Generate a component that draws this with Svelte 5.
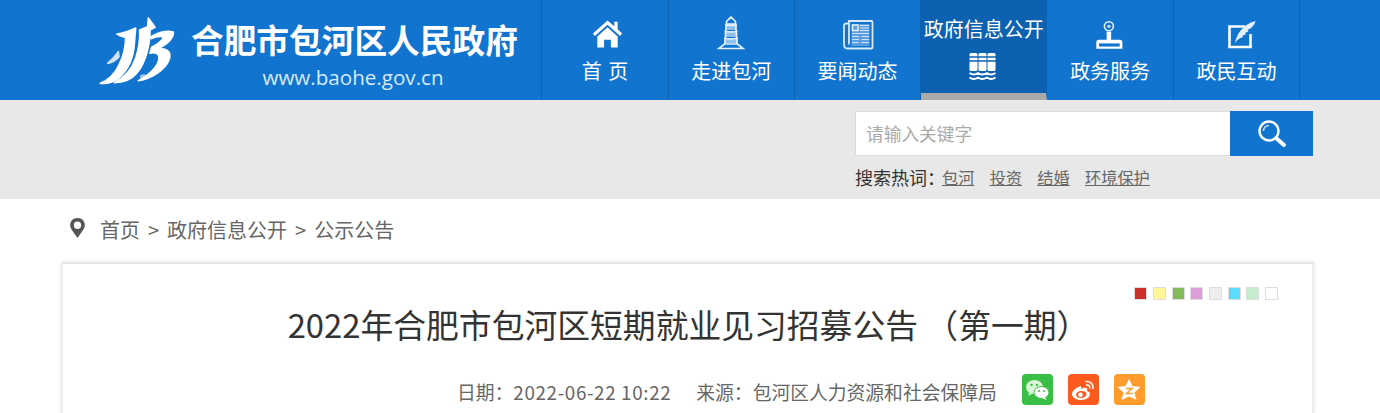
<script>
  const navItems = [
    { label: '首 页', icon: 'home' },
    { label: '走进包河', icon: 'tower' },
    { label: '要闻动态', icon: 'news' },
    { label: '政府信息公开', icon: 'books', active: true },
    { label: '政务服务', icon: 'stamp' },
    { label: '政民互动', icon: 'edit' }
  ]
  const hotWords = ['包河', '投资', '结婚', '环境保护']
  const swatches = ['#cc3229', '#fff79a', '#83ba5a', '#dd9dd8', '#eeeeee', '#58dcff', '#c7edcf', '#ffffff']
</script>

<header class="top">
  <div class="brand">
    <svg class="logo" width="90" height="80" viewBox="0 0 270 240">
      <g fill="#fff" stroke="#fff" stroke-width="5" stroke-linejoin="round">
        <path d="M66 72 C85 70 105 62 122 54 L118 100 C116 140 100 180 70 205 C55 216 35 222 16 220 C40 210 60 190 72 165 C85 140 92 105 92 82 C84 80 74 78 66 72 Z" />
        <path d="M70 125 C60 140 50 150 38 160 C50 158 62 152 72 140 Z" opacity="0.8" />
        <path d="M160 24 L180 52 L165 60 C165 110 150 160 125 190 C110 208 85 218 58 218 C85 205 110 180 122 145 C132 115 135 80 134 60 L158 50 Z" />
        <path d="M168 80 C190 68 215 60 235 66 C236 85 215 105 185 118 C215 112 232 125 222 150 C210 180 170 205 130 212 C160 198 190 170 192 145 C193 130 180 125 165 130 L170 112 C185 105 205 90 205 80 C195 78 180 80 168 86 Z" />
        <ellipse cx="146" cy="200" rx="9" ry="5" opacity="0.6" />
      </g>
    </svg>
    <div class="brand-text">
      <div class="site-name">合肥市包河区人民政府</div>
      <div class="site-url">www.baohe.gov.cn</div>
    </div>
  </div>
  <nav class="nav">
    {#each navItems as item}
      <div class="nav-item" class:active={item.active}>
        {#if item.active}
          <span class="nav-label">{item.label}</span>
        {/if}
        <svg class="nav-icon" width="34" height="34" viewBox="0 0 34 34">
          {#if item.icon === 'home'}
            <g transform="translate(3 1.5) scale(.97)">
              <path fill="#fff" d="M17 3 L24 9 V4.5 H27.5 V12 L32 16.5 L30 19 L17 7.5 L4 19 L2 16.5 Z" />
              <path fill="#fff" d="M17 10 L27.5 19.5 V31 H20.5 V23 H13.5 V31 H6.5 V19.5 Z" />
            </g>
          {:else if item.icon === 'tower'}
            <path fill="#8fc0ee" d="M12 8 H22 V14 H12 Z M11.5 15 H22.5 V21 H11.5 Z M11 22 H23 V27 H11 Z" />
            <g fill="none" stroke="#e4f0fc" stroke-width="1.7">
              <path d="M17 1 L21.5 5.5 V8 H12.5 V5.5 Z" />
              <path d="M11 8.5 Q17 10.5 23 8.5 M12 9.5 V15 M22 9.5 V15 M10.5 15 Q17 17 23.5 15 M11.5 16 V22 M22.5 16 V22 M10 22 Q17 24 24 22 M11 23 V28 M23 23 V28" />
              <path d="M5 32.5 L10.5 28 H23.5 L29 32.5 Z" />
            </g>
          {:else if item.icon === 'news'}
            <g transform="translate(0 1.5)">
              <path fill="none" stroke="#d8e9fa" stroke-width="1.8" d="M8 6 V3.5 H30.5 Q31.5 3.5 31.5 5 V30 Q31.5 31 30 31 H6.5 Q3 31 3 27 V8 Q3 6 5.5 6 H8 V27" />
              <rect x="10.5" y="6.5" width="18" height="22" fill="#5b9fe0" />
              <path fill="none" stroke="#e4f0fc" stroke-width="1.5" d="M11.5 7.5 H17 V13 H11.5 Z" />
              <path stroke="#cfe3f8" stroke-width="1.2" d="M19 8 H28 M19 10.5 H28 M19 13 H28 M11 16 H28 M11 19 H18 M20.5 19 H28 M11 22 H18 M20.5 22 H28 M11 25 H18 M20.5 25 H28" />
            </g>
          {:else if item.icon === 'books'}
            <g fill="#fff">
              <rect x="2.5" y="3" width="8" height="18" rx="1.5" />
              <rect x="11.5" y="3" width="8" height="18" rx="1.5" />
              <rect x="20.5" y="3" width="8" height="18" rx="1.5" />
            </g>
            <path stroke="#0c62b0" stroke-width="1.3" d="M2 7 H29 M2 11 H29" />
            <g fill="none" stroke="#fff" stroke-width="1.8">
              <path d="M2.5 23 Q7 26 11 23 Q15 26 20 23 Q24 26 28.5 23" />
              <path d="M2.5 27.5 Q7 30.5 11 27.5 Q15 30.5 20 27.5 Q24 30.5 28.5 27.5" />
            </g>
          {:else if item.icon === 'stamp'}
            <g transform="translate(1.5 4) scale(.9)">
              <circle cx="16" cy="7" r="5" fill="none" stroke="#e4f0fc" stroke-width="1.8" />
              <circle cx="16" cy="7" r="1.8" fill="#cfe3f8" />
              <path fill="#fff" d="M13.5 13 H18.5 V22 H28 Q31 22 31 25 V32 H2 V25 Q2 22 5 22 H13.5 Z" />
              <path fill="#1174cf" d="M5 26 H28 V29.5 H5 Z" />
            </g>
          {:else if item.icon === 'edit'}
            <path fill="none" stroke="#fff" stroke-width="2.6" d="M31.5 18 V31 H10.5 V10.5 H26" />
            <path fill="#e4f0fc" d="M36.5 5 C31 6 26 9.5 22 14 C19 17.5 17 22 16 27 C19 23 21 22 24 21 L23.5 19.5 L27 18.5 L26 17 L29.5 15.5 L28.5 14 L32 12 C34 10 36 8 36.5 5 Z" />
          {/if}
        </svg>
        {#if !item.active}
          <span class="nav-label">{item.label}</span>
        {/if}
      </div>
    {/each}
  </nav>
</header>

<section class="search-band">
  <div class="search-box">
    <div class="search-row">
      <div class="search-input">请输入关键字</div>
      <div class="search-btn">
        <svg width="30" height="30" viewBox="0 0 30 30">
          <circle cx="12" cy="12" r="9.5" fill="none" stroke="#fff" stroke-width="2.4" />
          <path d="M6.5 12 A5.5 5.5 0 0 1 12 6.5" fill="none" stroke="#cfe3f8" stroke-width="1.4" />
          <path d="M19.5 19.5 L27 26" stroke="#fff" stroke-width="4" stroke-linecap="round" />
        </svg>
      </div>
    </div>
    <div class="hot">
      <span class="hot-title">搜索热词：</span>
      {#each hotWords as word}
        <a class="hot-link" href="#top">{word}</a>
      {/each}
    </div>
  </div>
</section>

<div class="crumbs">
  <svg class="pin" width="17" height="22" viewBox="0 0 18 24">
    <path fill="#555" fill-rule="evenodd" d="M9 1 C4 1 1 4.5 1 9 C1 13 6 18 9 23 C12 18 17 13 17 9 C17 4.5 14 1 9 1 Z M9 5 A4 4 0 1 1 9 13 A4 4 0 1 1 9 5 Z" />
  </svg>
  <span>首页</span>
  <span class="sep">&gt;</span>
  <span>政府信息公开</span>
  <span class="sep">&gt;</span>
  <span>公示公告</span>
</div>

<main class="card">
  <div class="swatches">
    {#each swatches as color}
      <span class="swatch" style="background:{color}"></span>
    {/each}
  </div>
  <h1 class="title">2022年合肥市包河区短期就业见习招募公告 （第一期）</h1>
  <div class="meta">
    <span class="meta-text">日期：<span class="meta-time">2022-06-22 10:22</span></span>
    <span class="meta-text meta-source">来源：包河区人力资源和社会保障局</span>
    <div class="share">
      <span class="share-btn wechat">
        <svg width="25" height="22" viewBox="0 0 25 22">
          <ellipse cx="9.5" cy="8" rx="8.5" ry="7" fill="#d9f5d5" />
          <path d="M4 13 L3.5 17 L8 14 Z" fill="#d9f5d5" />
          <ellipse cx="16.5" cy="13.5" rx="7.5" ry="6" fill="#fff" stroke="#39bf45" stroke-width="1" />
          <path d="M20 18 L21.5 21 L17 19 Z" fill="#fff" />
          <circle cx="6.5" cy="6" r="1.2" fill="#39bf45" />
          <circle cx="12" cy="6" r="1.2" fill="#39bf45" />
          <circle cx="14" cy="12" r="1" fill="#39bf45" />
          <circle cx="19" cy="12" r="1" fill="#39bf45" />
        </svg>
      </span>
      <span class="share-btn weibo">
        <svg width="24" height="22" viewBox="0 0 24 22">
          <path fill="#fff" fill-rule="evenodd" d="M9.5 7 C5 8.5 1 12 1 15 C1 18.5 5 21 10 21 C15.5 21 19 18 19 15 C19 13 17 12.5 16 12 C16.5 10.5 16.5 9.5 15.5 9 C14 8.5 12 9 10 10 C10.5 8 10.5 6.8 9.5 7 Z M9.5 12 C13 11.7 15.5 13 15.5 15 C15.5 17 13.5 18.6 10.5 19 C7.5 19.2 5 18 5 15.8 C5 14 7 12.2 9.5 12 Z" />
          <circle cx="9.5" cy="15.7" r="2.3" fill="#fff" />
          <path d="M15 2.5 C19 2 22.5 5 22 9.5 M15.5 6 C17.5 5.7 19 7 18.8 9" fill="none" stroke="#fff" stroke-width="1.6" stroke-linecap="round" />
        </svg>
      </span>
      <span class="share-btn qzone">
        <svg width="24" height="23" viewBox="0 0 24 23">
          <path fill="#fff" d="M12 1 L15.5 8 L23.5 9 L17.5 14.5 L19.5 22 L12 18.5 L4.5 22 L6.5 14.5 L0.5 9 L8.5 8 Z" />
          <path fill="none" stroke="#ff9c2c" stroke-width="1.5" d="M9 10.5 H15 L9.5 15.5 H15.5" />
        </svg>
      </span>
    </div>
  </div>
</main>

<style>
  :global(body) {
    margin: 0;
    background: #fff;
    font-family: "Noto Sans CJK SC", "Noto Sans", sans-serif;
  }
  .top {
    height: 100px;
    background: #1174cf;
    display: flex;
    padding-left: 95px;
    box-sizing: border-box;
  }
  .brand {
    width: 446.3px;
    display: flex;
    flex: none;
    gap: 6px;
  }
  .logo {
    margin-top: 10px;
    flex: none;
  }
  .brand-text {
    padding-top: 15px;
    text-align: center;
    color: #fff;
    width: 326px;
  }
  .site-name {
    font-size: 32.7px;
    font-weight: 700;
    line-height: 48px;
    white-space: nowrap;
  }
  .site-url {
    font-family: "Open Sans", sans-serif;
    font-size: 20.6px;
    line-height: 30px;
    color: #d8e9fa;
    margin: -1px 2px 0 0;
  }
  .nav {
    display: flex;
    border-left: 1px solid #0c62b0;
  }
  .nav-item {
    width: 125.3px;
    height: 84px;
    border-right: 1px solid #0c62b0;
    display: flex;
    flex-direction: column;
    align-items: center;
    color: #fff;
    font-size: 20px;
    padding-top: 16px;
    box-sizing: content-box;
  }
  .nav-label {
    line-height: 28px;
    margin-top: 7px;
    white-space: nowrap;
    word-spacing: 2px;
  }
  .nav-icon {
    display: block;
    flex: none;
    overflow: visible;
  }
  .nav-item.active {
    background: #0c62b0;
    border-bottom: 7px solid #aaaaaa;
    padding-top: 15px;
    height: 78px;
  }
  .nav-item.active .nav-label {
    margin-top: 0;
  }
  .nav-item.active .nav-icon {
    margin-top: 7px;
  }
  .search-band {
    height: 99px;
    background: #e8e8e8;
    display: flex;
    justify-content: flex-end;
    padding-right: 67px;
    padding-top: 11px;
    box-sizing: border-box;
  }
  .search-box {
    width: 458px;
  }
  .search-row {
    display: flex;
    height: 45px;
  }
  .search-input {
    flex: 1;
    background: #fff;
    border: 1px solid #dcdcdc;
    border-right: none;
    box-sizing: border-box;
    color: #aaa;
    font-size: 17.7px;
    line-height: 43px;
    padding-left: 10px;
  }
  .search-btn {
    width: 83px;
    background: #1174cf;
    display: flex;
    align-items: center;
    justify-content: center;
  }
  .hot {
    display: flex;
    align-items: center;
    margin-top: 7px;
    height: 28px;
  }
  .hot-title {
    font-size: 18px;
    color: #333;
    width: 87px;
    white-space: nowrap;
  }
  .hot-link {
    color: #666;
    font-size: 16.2px;
    margin-right: 15.3px;
    text-decoration: underline;
  }
  .crumbs {
    height: 63px;
    padding-left: 69px;
    padding-bottom: 3px;
    box-sizing: border-box;
    display: flex;
    align-items: center;
    color: #666;
    font-size: 20px;
    white-space: nowrap;
  }
  .pin {
    margin-right: 14px;
    margin-top: -3px;
  }
  .sep {
    margin: 0 8px;
    font-size: 20px;
  }
  .card {
    margin: 0 66px 0 61px;
    height: 151px;
    background: #fff;
    border-top: 2px solid #e6e6e6;
    border-left: 2px solid #eeeeee;
    border-right: 2px solid #eeeeee;
    box-sizing: border-box;
    box-shadow: 0 0 4px rgba(0, 0, 0, 0.1);
    overflow: hidden;
  }
  .swatches {
    display: flex;
    justify-content: flex-end;
    gap: 5.7px;
    padding: 23px 34px 0 0;
  }
  .swatch {
    width: 11px;
    height: 11px;
    border: 1px solid #dddddd;
  }
  .title {
    margin: 0 -2px 0 0;
    font-size: 32.8px;
    font-weight: 400;
    color: #333;
    line-height: 48px;
    text-align: center;
    white-space: nowrap;
  }
  .meta {
    display: flex;
    align-items: center;
    margin-top: 26px;
    padding-left: 394px;
    font-size: 18.8px;
    color: #666;
    white-space: nowrap;
  }
  .meta-text {
    padding-top: 4px;
  }
  .meta-time {
    letter-spacing: 0.65px;
  }
  .meta-source {
    margin-left: 25px;
  }
  .share {
    display: flex;
    gap: 15px;
    margin-left: 25px;
  }
  .share-btn {
    width: 31px;
    height: 31px;
    border-radius: 4px;
    display: flex;
    align-items: center;
    justify-content: center;
  }
  .wechat { background: #39bf45; }
  .weibo { background: #ff5a1e; }
  .qzone { background: #ff9c2c; }
</style>
